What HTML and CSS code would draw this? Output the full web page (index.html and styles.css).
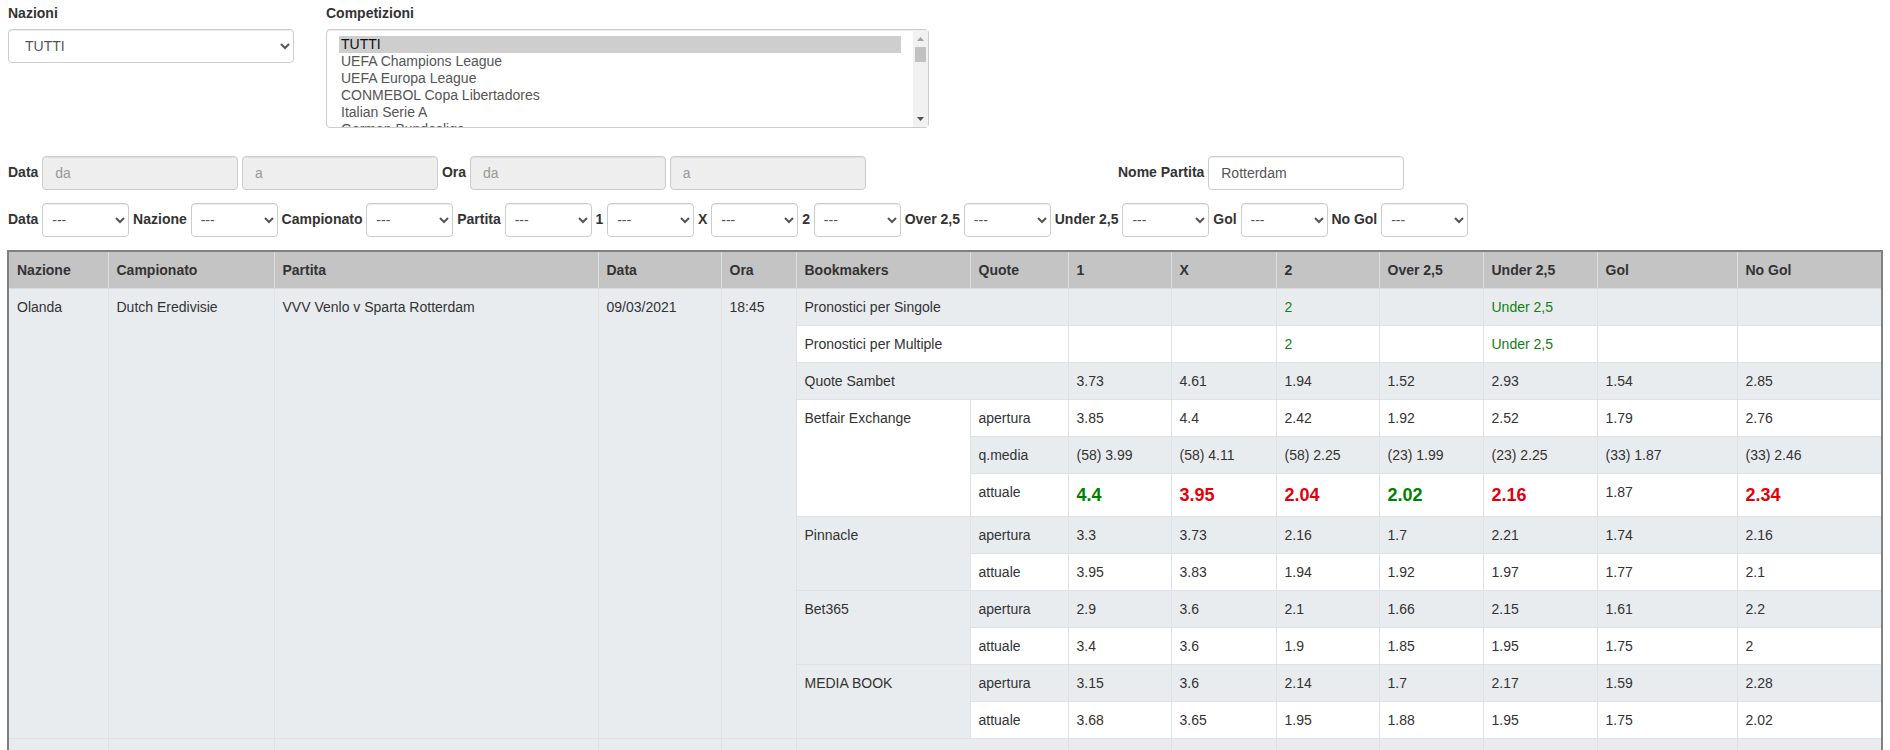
FILE: index.html
```html
<!DOCTYPE html>
<html lang="it">
<head>
<meta charset="utf-8">
<title>Quote</title>
<link rel="stylesheet" href="styles.css">
</head>
<body>
<div class="page">
  <div class="top">
    <div class="fg fg-naz">
      <label>Nazioni</label>
      <select class="fc">
        <option>TUTTI</option>
      </select>
    </div>
    <div class="fg fg-comp">
      <label>Competizioni</label>
      <div class="listwrap">
        <select class="fc list" multiple>
          <option selected>TUTTI</option>
          <option>UEFA Champions League</option>
          <option>UEFA Europa League</option>
          <option>CONMEBOL Copa Libertadores</option>
          <option>Italian Serie A</option>
          <option>German Bundesliga</option>
          <option>Spanish La Liga</option>
          <option>English Premier League</option>
          <option>French Ligue 1</option>
          <option>Dutch Eredivisie</option>
          <option>Portuguese Primeira Liga</option>
          <option>Belgian First Division A</option>
          <option>Turkish Super Lig</option>
          <option>Scottish Premiership</option>
          <option>Austrian Bundesliga</option>
          <option>Swiss Super League</option>
          <option>Greek Super League</option>
          <option>Russian Premier League</option>
          <option>Danish Superliga</option>
          <option>Norwegian Eliteserien</option>
          <option>Swedish Allsvenskan</option>
          <option>Italian Serie B</option>
          <option>German 2. Bundesliga</option>
          <option>Spanish Segunda Division</option>
          <option>English Championship</option>
        </select>
        <div class="sbar" aria-hidden="true">
          <div class="sbtn">
            <svg width="7" height="4" viewBox="0 0 7 4"><path d="M0 4 L3.5 0 L7 4 Z" fill="#a3a3a3"/></svg>
          </div>
          <div class="sthumb"></div>
          <div class="sfill"></div>
          <div class="sbtn">
            <svg width="7" height="4" viewBox="0 0 7 4"><path d="M0 0 L7 0 L3.5 4 Z" fill="#505050"/></svg>
          </div>
        </div>
      </div>
    </div>
  </div>

  <div class="row2">
    <div class="range">
      <label>Data</label>
      <input class="fc inp ro" placeholder="da" readonly>
      <input class="fc inp ro" placeholder="a" readonly>
      <label>Ora</label>
      <input class="fc inp ro" placeholder="da" readonly>
      <input class="fc inp ro" placeholder="a" readonly>
    </div>
    <div class="nome">
      <label>Nome Partita</label>
      <input class="fc inp" value="Rotterdam">
    </div>
  </div>

  <div class="row3">
    <label>Data</label>
    <select class="fc sm"><option>---</option></select>
    <label>Nazione</label>
    <select class="fc sm"><option>---</option></select>
    <label>Campionato</label>
    <select class="fc sm"><option>---</option></select>
    <label>Partita</label>
    <select class="fc sm"><option>---</option></select>
    <label>1</label>
    <select class="fc sm"><option>---</option></select>
    <label>X</label>
    <select class="fc sm"><option>---</option></select>
    <label>2</label>
    <select class="fc sm"><option>---</option></select>
    <label>Over 2,5</label>
    <select class="fc sm"><option>---</option></select>
    <label>Under 2,5</label>
    <select class="fc sm"><option>---</option></select>
    <label>Gol</label>
    <select class="fc sm"><option>---</option></select>
    <label>No Gol</label>
    <select class="fc sm"><option>---</option></select>
  </div>

  <div class="tablewrap">
    <table class="quote">
      <colgroup>
        <col class="c-naz">
        <col class="c-camp">
        <col class="c-part">
        <col class="c-data">
        <col class="c-ora">
        <col class="c-book">
        <col class="c-quote">
        <col class="c-1">
        <col class="c-x">
        <col class="c-2">
        <col class="c-over">
        <col class="c-under">
        <col class="c-gol">
        <col class="c-nogol">
      </colgroup>
      <thead>
        <tr>
          <th>Nazione</th>
          <th>Campionato</th>
          <th>Partita</th>
          <th>Data</th>
          <th>Ora</th>
          <th>Bookmakers</th>
          <th>Quote</th>
          <th>1</th>
          <th>X</th>
          <th>2</th>
          <th>Over 2,5</th>
          <th>Under 2,5</th>
          <th>Gol</th>
          <th>No Gol</th>
        </tr>
      </thead>
      <tbody>
        <tr class="odd">
          <td rowspan="12">Olanda</td>
          <td rowspan="12">Dutch Eredivisie</td>
          <td rowspan="12">VVV Venlo v Sparta Rotterdam</td>
          <td rowspan="12">09/03/2021</td>
          <td rowspan="12">18:45</td>
          <td colspan="2">Pronostici per Singole</td>
          <td></td><td></td><td class="tip">2</td><td></td><td class="tip">Under 2,5</td><td></td><td></td>
        </tr>
        <tr class="even">
          <td colspan="2">Pronostici per Multiple</td>
          <td></td><td></td><td class="tip">2</td><td></td><td class="tip">Under 2,5</td><td></td><td></td>
        </tr>
        <tr class="odd">
          <td colspan="2">Quote Sambet</td>
          <td>3.73</td><td>4.61</td><td>1.94</td><td>1.52</td><td>2.93</td><td>1.54</td><td>2.85</td>
        </tr>
        <tr class="even">
          <td rowspan="3">Betfair Exchange</td>
          <td>apertura</td>
          <td>3.85</td><td>4.4</td><td>2.42</td><td>1.92</td><td>2.52</td><td>1.79</td><td>2.76</td>
        </tr>
        <tr class="odd">
          <td>q.media</td>
          <td>(58) 3.99</td><td>(58) 4.11</td><td>(58) 2.25</td><td>(23) 1.99</td><td>(23) 2.25</td><td>(33) 1.87</td><td>(33) 2.46</td>
        </tr>
        <tr class="even">
          <td>attuale</td>
          <td class="big up">4.4</td>
          <td class="big down">3.95</td>
          <td class="big down">2.04</td>
          <td class="big up">2.02</td>
          <td class="big down">2.16</td>
          <td>1.87</td>
          <td class="big down">2.34</td>
        </tr>
        <tr class="odd">
          <td rowspan="2">Pinnacle</td>
          <td>apertura</td>
          <td>3.3</td><td>3.73</td><td>2.16</td><td>1.7</td><td>2.21</td><td>1.74</td><td>2.16</td>
        </tr>
        <tr class="even">
          <td>attuale</td>
          <td>3.95</td><td>3.83</td><td>1.94</td><td>1.92</td><td>1.97</td><td>1.77</td><td>2.1</td>
        </tr>
        <tr class="odd">
          <td rowspan="2">Bet365</td>
          <td>apertura</td>
          <td>2.9</td><td>3.6</td><td>2.1</td><td>1.66</td><td>2.15</td><td>1.61</td><td>2.2</td>
        </tr>
        <tr class="even">
          <td>attuale</td>
          <td>3.4</td><td>3.6</td><td>1.9</td><td>1.85</td><td>1.95</td><td>1.75</td><td>2</td>
        </tr>
        <tr class="odd">
          <td rowspan="2">MEDIA BOOK</td>
          <td>apertura</td>
          <td>3.15</td><td>3.6</td><td>2.14</td><td>1.7</td><td>2.17</td><td>1.59</td><td>2.28</td>
        </tr>
        <tr class="even">
          <td>attuale</td>
          <td>3.68</td><td>3.65</td><td>1.95</td><td>1.88</td><td>1.95</td><td>1.75</td><td>2.02</td>
        </tr>
        <tr class="odd">
          <td>&nbsp;</td><td></td><td></td><td></td><td></td><td colspan="2"></td>
          <td></td><td></td><td></td><td></td><td></td><td></td><td></td>
        </tr>
      </tbody>
    </table>
  </div>
</div>
</body>
</html>
```

FILE: styles.css
```css
* {
  box-sizing: border-box;
}

body {
  margin: 0;
  font-family: "Liberation Sans", Arial, Helvetica, sans-serif;
  font-size: 14px;
  line-height: 1.42857;
  color: #333;
  background: #fff;
}

.page {
  padding: 4px 0 0 8px;
}

label {
  font-weight: bold;
  white-space: nowrap;
}

/* form controls (bootstrap-like) */
.fc {
  display: block;
  height: 34px;
  padding: 6px 12px;
  font-family: inherit;
  font-size: 14px;
  line-height: 1.42857;
  color: #555;
  background-color: #fff;
  border: 1px solid #ccc;
  border-radius: 4px;
  box-shadow: inset 0 1px 1px rgba(0, 0, 0, 0.075);
}

.fc::placeholder {
  color: #999;
}

.top {
  display: flex;
  align-items: flex-start;
}

.fg label {
  display: block;
  height: 20px;
  margin-bottom: 5px;
}

.fg-naz {
  width: 286px;
}

.fg-naz .fc {
  width: 100%;
}

.fg-comp {
  width: 603px;
  margin-left: 32px;
}

.listwrap {
  position: relative;
}

.list {
  width: 100%;
  height: 99px;
  padding-right: 27px;
  overflow: hidden;
}

/* classic scrollbar drawn over the listbox's right padding */
.sbar {
  position: absolute;
  top: 1px;
  right: 1px;
  bottom: 1px;
  width: 15px;
  display: flex;
  flex-direction: column;
  background: #f1f1f1;
}

.sbtn {
  height: 17px;
  display: flex;
  align-items: center;
  justify-content: center;
  flex: none;
}

.sthumb {
  height: 15px;
  margin: 0 2px;
  background: #c1c1c1;
  flex: none;
}

.sfill {
  flex: 1;
}

.row2 {
  display: flex;
  align-items: center;
  margin-top: 28px;
}

.range,
.nome {
  display: flex;
  align-items: center;
  gap: 3.89px;
}

.range {
  width: 1110px;
}

.inp {
  width: 196px;
}

.ro {
  background-color: #eee;
}

.row3 {
  display: flex;
  align-items: center;
  gap: 3.89px;
  margin-top: 13px;
}

.sm {
  width: 87px;
  padding: 6px 5px;
}

/* table */
.tablewrap {
  margin: 13px 0 0 -1px;
  width: 1876px;
  border: 2px solid #808080;
  border-bottom: 0;
}

.quote {
  width: 1872px;
  table-layout: fixed;
  border-collapse: collapse;
  border-style: hidden;
}

.c-naz { width: 99px; }
.c-camp { width: 166px; }
.c-part { width: 324px; }
.c-data { width: 123px; }
.c-ora { width: 75px; }
.c-book { width: 174px; }
.c-quote { width: 98px; }
.c-1 { width: 103px; }
.c-x { width: 105px; }
.c-2 { width: 103px; }
.c-over { width: 104px; }
.c-under { width: 114px; }
.c-gol { width: 140px; }
.c-nogol { width: 144px; }

.quote th,
.quote td {
  padding: 9px 8px 7px;
  text-align: left;
  vertical-align: top;
  border: 1px solid #dee2e6;
  white-space: nowrap;
}

.quote th {
  background: #c4c4c4;
  font-weight: bold;
  border-color: #dcdcdc;
}

.quote tr.odd td {
  background: #e9ecef;
}

.quote tr.even td {
  background: #fff;
}

.quote td.tip {
  color: #108010;
}

.quote td.big {
  font-size: 18px;
  font-weight: bold;
}

.quote td.up {
  color: #008000;
}

.quote td.down {
  color: #e3000b;
}
```
